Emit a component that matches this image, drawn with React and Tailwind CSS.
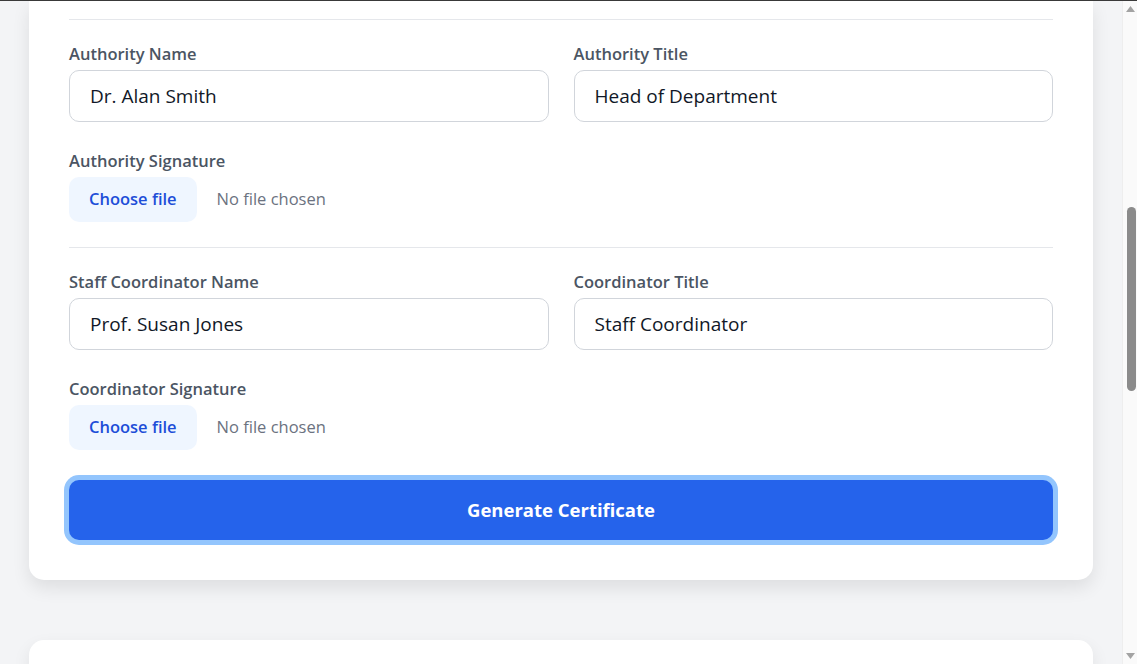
import React from "react";

const font = { fontFamily: '"Open Sans", "Noto Sans", sans-serif' };

function TextField({ label, value }) {
  return (
    <div className="flex flex-col">
      <label className="text-[16.5px] leading-[25px] font-semibold text-[#4b5563] mb-[4px]">{label}</label>
      <input
        readOnly
        value={value}
        className="h-[52px] w-full rounded-[10px] border border-[#d1d5db] bg-white px-[20px] text-[19px] text-[#111827] outline-none"
      />
    </div>
  );
}

function FileField({ label }) {
  return (
    <div className="flex flex-col">
      <label className="text-[16.5px] leading-[25px] font-semibold text-[#4b5563] mb-[4px]">{label}</label>
      <div className="flex items-center">
        <span className="h-[45px] flex items-center px-[20px] rounded-[10px] bg-[#eff6ff] text-[16.5px] font-semibold text-[#1d4ed8]">
          Choose file
        </span>
        <span className="ml-[20px] text-[16.5px] text-[#6b7280]">No file chosen</span>
      </div>
    </div>
  );
}

function SignerBlock({ nameLabel, nameValue, titleLabel, titleValue, sigLabel }) {
  return (
    <div className="border-t border-[#e5e7eb] pt-[21px] flex flex-col gap-[26px]">
      <div className="grid grid-cols-2 gap-[25px]">
        <TextField label={nameLabel} value={nameValue} />
        <TextField label={titleLabel} value={titleValue} />
      </div>
      <FileField label={sigLabel} />
    </div>
  );
}

export default function App() {
  return (
    <div style={font} className="h-[664px] overflow-hidden flex flex-col bg-[#f3f4f6]">
      <div className="h-px bg-[#3a3a3a] shrink-0" />
      <div className="flex flex-1 min-h-0">
        <main className="flex-1 px-[29px] flex flex-col">
          <div className="bg-white rounded-b-[15px] shadow-[0_8px_18px_rgba(0,0,0,0.09)] px-[40px] pt-[18px] pb-[40px] flex flex-col">
            <div className="flex flex-col gap-[25px]">
              <SignerBlock
                nameLabel="Authority Name"
                nameValue="Dr. Alan Smith"
                titleLabel="Authority Title"
                titleValue="Head of Department"
                sigLabel="Authority Signature"
              />
              <SignerBlock
                nameLabel="Staff Coordinator Name"
                nameValue="Prof. Susan Jones"
                titleLabel="Coordinator Title"
                titleValue="Staff Coordinator"
                sigLabel="Coordinator Signature"
              />
            </div>
            <button className="mt-[30px] h-[60px] w-full rounded-[10px] bg-[#2563eb] text-white text-[18.5px] font-bold ring-[5px] ring-[#93c5fd]">
              Generate Certificate
            </button>
          </div>
          <div className="mt-[60px] flex-1 bg-white rounded-t-[15px] shadow-[0_8px_18px_rgba(0,0,0,0.09)]" />
        </main>
        <aside className="w-[15px] shrink-0 bg-[#fafafa] border-l border-[#eeeeee] flex flex-col items-center">
          <div className="h-[16px] flex items-center justify-center">
            <svg width="9" height="6" viewBox="0 0 9 6"><path d="M4.5 0L9 6H0z" fill="#a3a3a3" /></svg>
          </div>
          <div className="mt-[190px] h-[184px] w-[9px] ml-[2px] rounded-full bg-[#8b8b8b]" />
          <div className="flex-1" />
          <div className="h-[16px] flex items-center justify-center">
            <svg width="9" height="6" viewBox="0 0 9 6"><path d="M0 0H9L4.5 6z" fill="#a3a3a3" /></svg>
          </div>
        </aside>
      </div>
    </div>
  );
}
